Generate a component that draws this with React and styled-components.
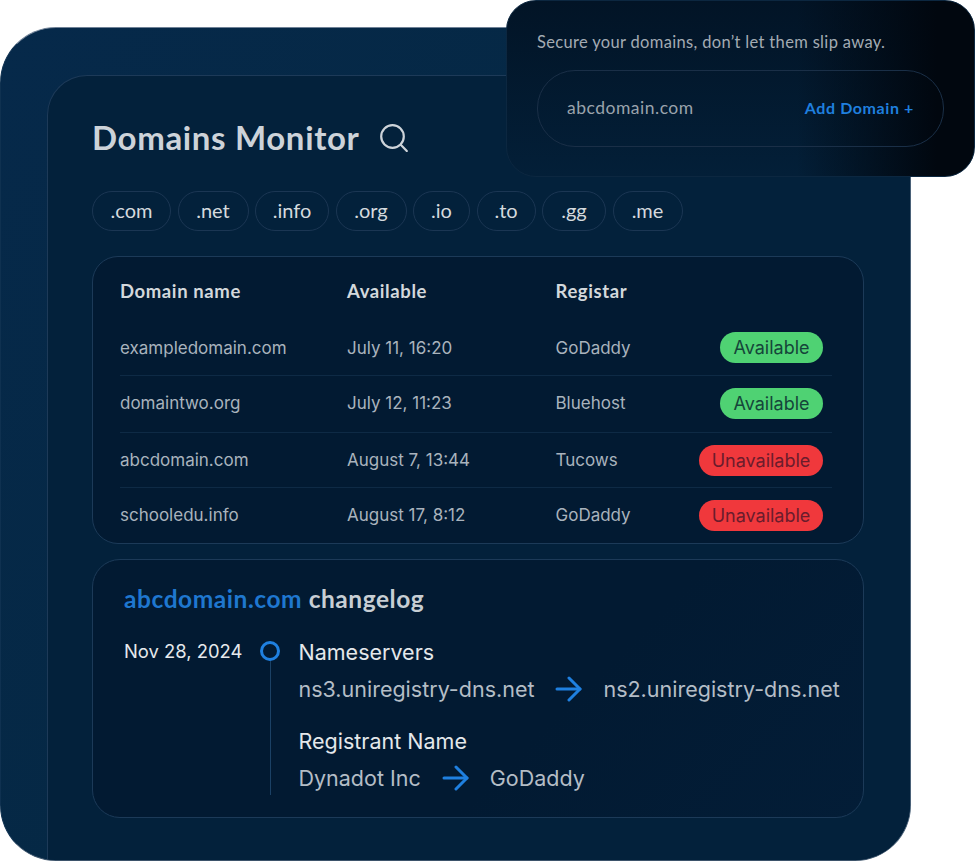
import React from "react"
import styled, { createGlobalStyle } from "styled-components"

const GlobalStyle = createGlobalStyle`
  html, body {
    margin: 0;
    padding: 0;
    background: #fff;
  }
  * {
    box-sizing: border-box;
  }
`

const Stage = styled.div`
  position: relative;
  width: 975px;
  height: 861px;
  padding-top: 27px;
  overflow: hidden;
  font-family: "Inter", "Liberation Sans", sans-serif;
`

const Card = styled.div`
  display: flex;
  width: 911px;
  height: 834px;
  padding: 47px 0 0 46px;
  overflow: hidden;
  border: 1px solid;
  border-color: #6f8196 #4a6178 #3d546b #0f3150;
  border-radius: 56px;
  background: linear-gradient(125deg, #06294a 0%, #052844 50%, #02223e 100%);
`

const Panel = styled.div`
  display: flex;
  flex-direction: column;
  flex: 1;
  padding: 44px 46px 0 44px;
  border-top: 1px solid #1d3a58;
  border-left: 1px solid #1d3a58;
  border-radius: 40px 0 0 0;
  background: #03213b;
`

const TitleRow = styled.div`
  display: flex;
  align-items: center;
  gap: 20px;
  height: 36px;
`

const Title = styled.h1`
  margin: 0 0 2px;
  font-family: "Lato", sans-serif;
  font-size: 33px;
  font-weight: 700;
  letter-spacing: 0.65px;
  color: #cdd3d9;
`

const ChipRow = styled.div`
  display: flex;
  gap: 6.5px;
  margin-top: 35px;
`

const Chip = styled.div`
  display: flex;
  align-items: center;
  justify-content: center;
  width: ${(p) => p.$w}px;
  height: 40px;
  padding-bottom: 3px;
  border: 1px solid #1b3653;
  border-radius: 20px;
  font-family: "Lato", sans-serif;
  font-size: 20px;
  color: #d5dade;
`

const TableCard = styled.div`
  margin-top: 25px;
  height: 288px;
  padding: 0 31px 0 27px;
  border: 1px solid #1c3a58;
  border-radius: 26px;
  background: #021a32;
`

const Row = styled.div`
  display: grid;
  grid-template-columns: 227px 208.5px 1fr auto;
  align-items: center;
  height: ${(p) => p.$h}px;
  padding: ${(p) => p.$top || 0}px 9px ${(p) => p.$bottom || 0}px 0;
  border-bottom: ${(p) => (p.$line ? "1px solid #0e2a45" : "none")};
`

const HeadCell = styled.div`
  font-family: "Lato", sans-serif;
  font-size: 18.5px;
  font-weight: 700;
  letter-spacing: 0.6px;
  color: #d3d8dc;
`

const Cell = styled.div`
  font-size: 17px;
  color: #a9b3bd;
`

const Badge = styled.div`
  display: flex;
  align-items: center;
  justify-content: center;
  height: 31px;
  width: ${(p) => (p.$ok ? 103 : 124)}px;
  border-radius: 16px;
  font-size: 18px;
  color: ${(p) => (p.$ok ? "#15453a" : "#6a1c2c")};
  background: ${(p) => (p.$ok ? "#4fd273" : "#f0383c")};
`

const LogCard = styled.div`
  margin-top: 15px;
  height: 259px;
  padding: 24px 0 0 31px;
  border: 1px solid #1c3a58;
  border-radius: 28px;
  background: linear-gradient(135deg, #021a32 0%, #021a32 60%, #031d37 100%);
`

const LogTitle = styled.div`
  font-family: "Lato", sans-serif;
  font-size: 24.5px;
  line-height: 30px;
  font-weight: 700;
  letter-spacing: 0.55px;
  color: #c7ced4;
`

const Accent = styled.span`
  color: #1f77cf;
`

const Timeline = styled.div`
  display: grid;
  grid-template-columns: 118px 56.5px 1fr;
  margin-top: 23px;
`

const DateText = styled.div`
  font-size: 18.4px;
  line-height: 28px;
  white-space: nowrap;
  color: #e6e9ec;
`

const Rail = styled.div`
  display: flex;
  flex-direction: column;
  align-items: center;
  padding-top: 4px;
  height: 158px;
`

const Dot = styled.div`
  flex: none;
  width: 20px;
  height: 20px;
  border: 3.5px solid #1f80e0;
  border-radius: 50%;
`

const RailLine = styled.div`
  flex: 1;
  width: 1px;
  background: #1b4165;
`

const Entries = styled.div`
  padding-top: 1px;
`

const Entry = styled.div`
  margin-bottom: 24px;
`

const EntryName = styled.div`
  font-size: 21.5px;
  line-height: 28px;
  color: #e4e8eb;
`

const Change = styled.div`
  display: flex;
  align-items: center;
  gap: 21px;
  margin-top: 9px;
  font-size: 21.5px;
  line-height: 28px;
  color: #b4bdc6;
`

const Popup = styled.div`
  position: absolute;
  top: 0;
  left: 506px;
  width: 469px;
  height: 177px;
  padding: 31px 30px 0 30px;
  border: 1px solid #0c2740;
  border-radius: 30px;
  background: linear-gradient(90deg, rgba(1, 7, 15, 0) 62%, #01070f 92%),
    linear-gradient(180deg, #021426 0%, #031f38 100%);
`

const PopupText = styled.div`
  font-family: "Lato", sans-serif;
  font-size: 16.5px;
  line-height: 20px;
  letter-spacing: 0.33px;
  color: #a3abb3;
`

const InputBox = styled.div`
  display: flex;
  align-items: center;
  justify-content: space-between;
  height: 77px;
  margin-top: 18px;
  padding: 0 29px 2px;
  border: 1px solid #1a2f47;
  border-radius: 38px;
`

const InputText = styled.span`
  font-family: "Lato", sans-serif;
  font-size: 17.5px;
  letter-spacing: 0.5px;
  color: #9aa3ac;
`

const AddLink = styled.span`
  font-family: "Lato", sans-serif;
  font-size: 16px;
  font-weight: 700;
  letter-spacing: 0.6px;
  color: #1f7fdf;
`

const ArrowIcon = () => (
  <svg width="27" height="26" viewBox="0 0 27 26" fill="none" stroke="#1f80e0" strokeWidth="3" strokeLinecap="round" strokeLinejoin="round">
    <path d="M2 13h23" />
    <path d="M14 2l11 11-11 11" />
  </svg>
)

const SearchIcon = () => (
  <svg width="28" height="28" viewBox="0 0 28 28" fill="none" stroke="#cdd3d9" strokeWidth="2.2" strokeLinecap="round">
    <circle cx="12.5" cy="12.5" r="11.3" />
    <path d="M21 21l5.8 6" />
  </svg>
)

const chips = [
  [".com", 79],
  [".net", 71],
  [".info", 74],
  [".org", 71],
  [".io", 57],
  [".to", 59],
  [".gg", 64],
  [".me", 70],
]

const rows = [
  { name: "exampledomain.com", date: "July 11, 16:20", reg: "GoDaddy", ok: true, h: 56 },
  { name: "domaintwo.org", date: "July 12, 11:23", reg: "Bluehost", ok: true, h: 57, bottom: 2 },
  { name: "abcdomain.com", date: "August 7, 13:44", reg: "Tucows", ok: false, h: 55 },
  { name: "schooledu.info", date: "August 17, 8:12", reg: "GoDaddy", ok: false, h: 55, bottom: 1 },
]

export default function App() {
  return (
    <Stage>
      <GlobalStyle />
      <Card>
        <Panel>
          <TitleRow>
            <Title>Domains Monitor</Title>
            <SearchIcon />
          </TitleRow>
          <ChipRow>
            {chips.map(([label, w]) => (
              <Chip key={label} $w={w}>{label}</Chip>
            ))}
          </ChipRow>
          <TableCard>
            <Row $h={63} $top={4}>
              <HeadCell>Domain name</HeadCell>
              <HeadCell>Available</HeadCell>
              <HeadCell>Registar</HeadCell>
            </Row>
            {rows.map((r, i) => (
              <Row key={r.name} $h={r.h} $bottom={r.bottom} $line={i < rows.length - 1}>
                <Cell>{r.name}</Cell>
                <Cell>{r.date}</Cell>
                <Cell>{r.reg}</Cell>
                <Badge $ok={r.ok}>{r.ok ? "Available" : "Unavailable"}</Badge>
              </Row>
            ))}
          </TableCard>
          <LogCard>
            <LogTitle><Accent>abcdomain.com</Accent> changelog</LogTitle>
            <Timeline>
              <DateText>Nov 28, 2024</DateText>
              <Rail>
                <Dot />
                <RailLine />
              </Rail>
              <Entries>
                <Entry>
                  <EntryName>Nameservers</EntryName>
                  <Change>
                    <span>ns3.uniregistry-dns.net</span>
                    <ArrowIcon />
                    <span>ns2.uniregistry-dns.net</span>
                  </Change>
                </Entry>
                <Entry>
                  <EntryName>Registrant Name</EntryName>
                  <Change>
                    <span>Dynadot Inc</span>
                    <ArrowIcon />
                    <span>GoDaddy</span>
                  </Change>
                </Entry>
              </Entries>
            </Timeline>
          </LogCard>
        </Panel>
      </Card>
      <Popup>
        <PopupText>Secure your domains, don’t let them slip away.</PopupText>
        <InputBox>
          <InputText>abcdomain.com</InputText>
          <AddLink>Add Domain +</AddLink>
        </InputBox>
      </Popup>
    </Stage>
  )
}
